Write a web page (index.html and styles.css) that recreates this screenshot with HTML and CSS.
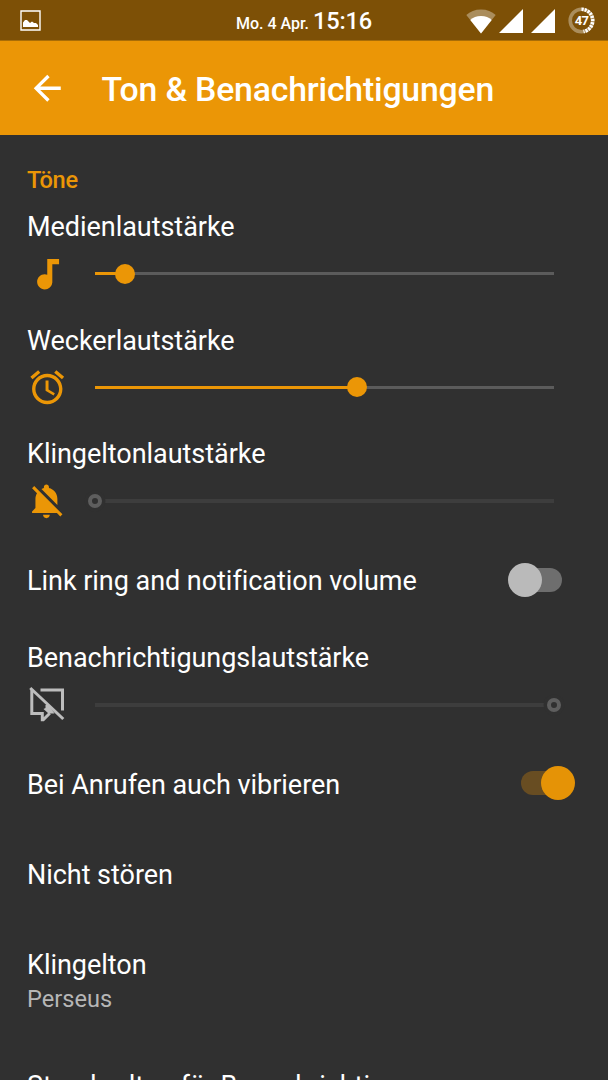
FILE: index.html
```html
<!DOCTYPE html>
<html lang="de">
<head>
  <meta charset="UTF-8">
  <meta name="viewport" content="width=device-width, initial-scale=1.0">
  <title>Ton &amp; Benachrichtigungen</title>
  <link rel="stylesheet" href="styles.css">
</head>
<body>
  <div class="statusbar">
    <svg class="picture" viewBox="0 0 21 21">
      <path d="M1 1h19v19H1z" fill="none" stroke="#fff" stroke-width="1.4"/>
      <path d="M3 17v-4.500l2-2.500h2l3 3 2-1.500 2 1.500h2l2 2v2z" fill="#fff"/>
    </svg>
    <div class="clock"><span class="date">Mo. 4 Apr.</span> <span class="time">15:16</span></div>
    <div class="signals">
      <svg class="wifi" viewBox="0 0 30 25">
        <path d="M15 24.500L0.300 6C4 2.500 9 0.500 15 0.500s11 2 14.700 5.500z" fill="#fff" fill-opacity=".35"/>
        <path d="M15 24.500L4.300 11C7 8.500 10.500 7 15 7s8 1.500 10.700 4z" fill="#fff"/>
      </svg>
      <svg class="cell" viewBox="0 0 24 24"><path d="M0 24L24 0v24z" fill="#fff"/></svg>
      <svg class="cell" viewBox="0 0 24 24"><path d="M0 24L24 0v24z" fill="#fff"/></svg>
      <div class="battery">
        <svg viewBox="0 0 27 27">
          <circle cx="13.500" cy="13.500" r="11.300" fill="none" stroke="#fff" stroke-opacity=".35" stroke-width="3.600"/>
          <path d="M13.500 2.200a11.300 11.300 0 0 1 2 22.400" fill="none" stroke="#fff" stroke-width="3.600" stroke-dasharray="2.200 1"/>
        </svg>
        <span>47</span>
      </div>
    </div>
  </div>

  <div class="toolbar">
    <svg class="back" viewBox="0 0 24 24"><path d="M20 11H7.830l5.590-5.590L12 4l-8 8 8 8 1.410-1.410L7.830 13H20v-2z"/></svg>
    <div class="title">Ton &amp; Benachrichtigungen</div>
  </div>

  <div class="list">
    <div class="section">Töne</div>

    <div class="volume">
      <div class="label">Medienlautstärke</div>
      <div class="control">
        <svg class="icon" viewBox="0 0 24 24"><path d="M12 3v9.280c-.470-.170-.970-.280-1.500-.280C8.010 12 6 14.010 6 16.500S8.010 21 10.500 21c2.310 0 4.200-1.750 4.450-4H15V6h4V3h-7z"/></svg>
        <div class="slider">
          <div class="fill" style="width: 6.700%"></div>
          <div class="thumb" style="left: 6.700%"></div>
        </div>
      </div>
    </div>

    <div class="volume">
      <div class="label">Weckerlautstärke</div>
      <div class="control">
        <svg class="icon" viewBox="0 0 24 24"><path d="M22 5.720l-4.600-3.860-1.290 1.530 4.600 3.860L22 5.720zM7.880 3.390L6.600 1.860 2 5.710l1.290 1.530 4.590-3.850zM12.500 8H11v6l4.750 2.850.750-1.230-3.750-2.220V8zM12 4c-4.970 0-9 4.030-9 9s4.020 9 9 9c4.970 0 9-4.030 9-9s-4.030-9-9-9zm0 16c-3.870 0-7-3.130-7-7s3.130-7 7-7 7 3.130 7 7-3.130 7-7 7z"/></svg>
        <div class="slider">
          <div class="fill" style="width: 57.100%"></div>
          <div class="thumb" style="left: 57.100%"></div>
        </div>
      </div>
    </div>

    <div class="volume">
      <div class="label">Klingeltonlautstärke</div>
      <div class="control">
        <svg class="icon" viewBox="0 0 24 24"><path d="M11.500 22c1.100 0 2-.900 2-2h-4c0 1.100.900 2 2 2zM18 10.500c0-3.070-2.130-5.640-5-6.320V3.500c0-.830-.670-1.500-1.500-1.500S10 2.670 10 3.500v.680c-.510.120-.990.320-1.450.560L18 14.180V10.500zm-.270 8.500l2 2L21 19.730 4.270 3 3 4.270l2.920 2.920C5.340 8.160 5 9.290 5 10.500V16l-2 2v1h14.730z"/></svg>
        <div class="slider disabled">
          <div class="thumb" style="left: 0%"></div>
        </div>
      </div>
    </div>

    <div class="row">
      <div class="label">Link ring and notification volume</div>
      <div class="switch"></div>
    </div>

    <div class="volume">
      <div class="label">Benachrichtigungslautstärke</div>
      <div class="control">
        <svg class="icon muted" viewBox="0 0 40.500 40.500">
          <path d="M13.500 5h22v20.500"/>
          <path d="M4.800 4.500v24h10.500v6.200h1l6.500-6.500"/>
          <path d="M3.300 3l33 31"/>
          <path class="solid" d="M18.500 20h3l6 8.500h-6l-5-4.500 2-1z"/>
        </svg>
        <div class="slider disabled">
          <div class="thumb" style="left: 100%"></div>
        </div>
      </div>
    </div>

    <div class="row">
      <div class="label">Bei Anrufen auch vibrieren</div>
      <div class="switch on"></div>
    </div>

    <div class="row">
      <div class="label">Nicht stören</div>
    </div>

    <div class="row two-line">
      <div class="label">Klingelton</div>
      <div class="summary">Perseus</div>
    </div>

    <div class="row two-line">
      <div class="label">Standardton für Benachrichtigungen</div>
    </div>
  </div>
</body>
</html>
```
FILE: styles.css
```css
* {
  box-sizing: border-box;
}
body {
  margin: 0;
  height: 1080px;
  overflow: hidden;
  background-color: #303030;
  color: #fff;
  font-family: Roboto, sans-serif;
}
svg {
  display: block;
}
.statusbar {
  height: 41px;
  padding: 0 13px 1px 20px;
  display: grid;
  grid-template-columns: 1fr auto 1fr;
  align-items: center;
  background-color: #7d5006;
  border-bottom: 1px solid #a96d06;
}
.picture {
  width: 21px;
  height: 21px;
  margin-bottom: 1px;
}
.clock {
  padding: 3px 7px 0 0;
  font-weight: 500;
  line-height: 36px;
  white-space: nowrap;
}
.date {
  font-size: 16px;
}
.time {
  font-size: 23.6px;
  letter-spacing: -0.2px;
}
.signals {
  display: flex;
  justify-content: flex-end;
  align-items: center;
}
.wifi {
  width: 30px;
  height: 25px;
  margin-right: 3px;
}
.cell {
  width: 24px;
  height: 24px;
  margin-right: 8px;
}
.battery {
  width: 27px;
  height: 27px;
  margin: 0 0 2px 5px;
  position: relative;
}
.battery span {
  position: absolute;
  inset: 0;
  font-size: 13px;
  font-weight: bold;
  letter-spacing: -0.8px;
  line-height: 27px;
  text-align: center;
}
.toolbar {
  height: 94px;
  padding-left: 27px;
  display: flex;
  align-items: center;
  background-color: #eb9606;
}
.back {
  width: 40.5px;
  height: 40.5px;
  fill: #fff;
}
.title {
  margin: 2px 0 0 34px;
  font-size: 33.8px;
  font-weight: 500;
  letter-spacing: -0.2px;
  white-space: nowrap;
}
.section {
  height: 59px;
  padding: 29px 27px 0;
  color: #eb9606;
  font-size: 23.6px;
  font-weight: 500;
  letter-spacing: -0.3px;
  line-height: 32px;
}
.label {
  padding-top: 1px;
  font-size: 27px;
  letter-spacing: -0.04px;
  line-height: 32px;
  white-space: nowrap;
}
.volume {
  height: 113.7px;
  padding: 16px 54px 0 27px;
}
.control {
  height: 61.6px;
  display: flex;
  align-items: center;
}
.icon {
  width: 40.5px;
  height: 40.5px;
  margin-right: 27px;
  flex: none;
  fill: #eb9606;
}
.muted {
  fill: none;
  stroke: #bdbdbd;
  stroke-width: 3;
}
.solid {
  fill: #bdbdbd;
  stroke: none;
}
.slider {
  flex: 1;
  height: 3.4px;
  position: relative;
  background-color: #5b5b5b;
}
.fill {
  height: 100%;
  background-color: #eb9606;
}
.thumb {
  position: absolute;
  top: 50%;
  width: 20px;
  height: 20px;
  border-radius: 50%;
  background-color: #eb9606;
  transform: translate(-50%, -50%);
}
.disabled {
  background-color: #3d3d3d;
}
/* the background coloured ring keeps a gap between thumb and track */
.disabled .thumb {
  width: 14px;
  height: 14px;
  border: 4px solid #5e5e5e;
  background-color: #303030;
  box-shadow: 0 0 0 3.5px #303030;
}
.row {
  height: 90px;
  padding: 0 46px 0 27px;
  display: flex;
  justify-content: space-between;
  align-items: center;
}
.row .label {
  padding-top: 2px;
}
.two-line {
  height: 121.7px;
  padding-top: 28px;
  display: block;
}
.summary {
  margin-top: 3px;
  color: #b6b6b6;
  font-size: 23.6px;
  line-height: 30px;
}
.switch {
  width: 41px;
  height: 24px;
  margin-bottom: 1px;
  position: relative;
  border-radius: 12px;
  background-color: #6e6e6e;
}
.switch::after {
  content: "";
  position: absolute;
  top: -5px;
  left: -13px;
  width: 34px;
  height: 34px;
  border-radius: 50%;
  background-color: #bababa;
}
.switch.on {
  background-color: #684d22;
}
.switch.on::after {
  left: 20px;
  background-color: #e59306;
}
```
